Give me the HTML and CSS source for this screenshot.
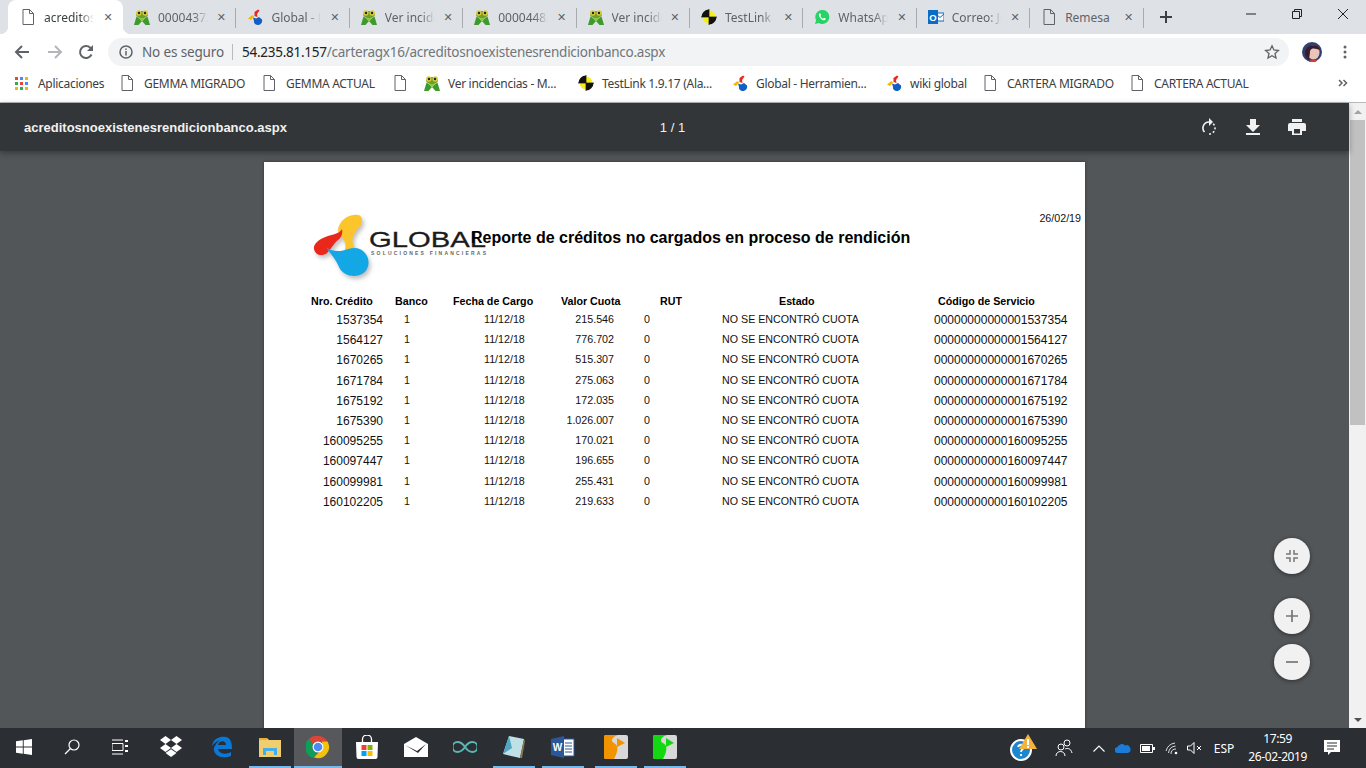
FILE: index.html
```html
<!DOCTYPE html>
<html lang="es">
<head>
  <meta charset="UTF-8" />
  <title>acreditosnoexistenesrendicionbanco.aspx</title>
  <link rel="stylesheet" href="styles.css">
</head>
<body>

  <!-- Shared icons -->
  <svg class="sprite" width="0" height="0">
    <symbol id="i-doc" viewBox="0 0 16 16">
      <path d="M3 .5h6.500L13.500 4.500v11H3z M9.500 .5v4h4" fill="none" stroke="#5f6368" stroke-width="1"/>
    </symbol>
    <symbol id="i-mantis" viewBox="0 0 16 16">
      <path d="M0 16 2.500 7.500 6 10l2 3 2-3 3.500-2.500L16 16h-4.500L8 12l-3.500 4z" fill="#3f9a2c"/>
      <path d="M4.500 8.500 8 12.500l3.500-4L8 7z" fill="#8cc63f"/>
      <ellipse cx="8" cy="5.500" rx="6" ry="3.500" fill="#6f9e2a"/>
      <circle cx="4.800" cy="4" r="2.700" fill="#d9cf3a"/>
      <circle cx="11.200" cy="4" r="2.700" fill="#d9cf3a"/>
      <circle cx="5" cy="4" r="1.200" fill="#222"/>
      <circle cx="11" cy="4" r="1.200" fill="#222"/>
    </symbol>
    <symbol id="i-global" viewBox="0 0 16 16">
      <path d="M7.500 3 11 0.500l1.500 1L10 5l.500 3-3-1z" fill="#e8281e"/>
      <path d="M1 9.500 5.500 6 7 7.500 4 11z" fill="#f7b500"/>
      <path d="M6 8.500l3 1 3-1.500 3 2.500c.8 3-1.500 5.500-4 5.500s-4.500-2-4-4z" fill="#0f5fc4"/>
    </symbol>
    <symbol id="i-testlink" viewBox="0 0 16 16">
      <circle cx="8" cy="8" r="6.500" fill="#f5ee1b"/>
      <path d="M8 8V.500A7.500 7.500 0 0 0 .500 8z M8 8v7.500A7.500 7.500 0 0 0 15.500 8z" fill="#111"/>
      <path d="M8 0v16M0 8h16" stroke="#111" stroke-width=".7"/>
    </symbol>
    <symbol id="i-whatsapp" viewBox="0 0 16 16">
      <path d="M1 15l1.100-3.800A7 7 0 1 1 4.800 14z" fill="#25d366"/>
      <path d="M5.500 4.500c-1 1-.8 2.500.5 4.200 1.300 1.700 3 2.800 4.300 2.600 1-.2 1.500-1 1.500-1.700L10 8.700l-.9 1C8 9.300 6.900 8.200 6.300 7l.8-1-.8-1.700z" fill="#fff"/>
    </symbol>
    <symbol id="i-outlook" viewBox="0 0 16 16">
      <rect x="8" y="4" width="8" height="8" fill="#fff" stroke="#0a6cc4"/>
      <path d="M8 5l4 3.500L16 5" fill="none" stroke="#0a6cc4"/>
      <rect x="0" y="1" width="10" height="14" fill="#0a6cc4"/>
      <text x="5" y="11.500" font-size="9.500" font-weight="700" font-family="Liberation Sans" text-anchor="middle" fill="#fff">O</text>
    </symbol>
  </svg>

  <!-- Tab strip -->
  <div class="tabstrip">
    <div class="tab tab-active">
      <svg class="tab-icon"><use href="#i-doc"/></svg>
      <span class="tab-title">acreditosn</span>
      <span class="tab-close">&#x2715;</span>
    </div>
    <div class="tab">
      <svg class="tab-icon"><use href="#i-mantis"/></svg>
      <span class="tab-title">00004372</span>
      <span class="tab-close">&#x2715;</span>
    </div>
    <div class="tab">
      <svg class="tab-icon"><use href="#i-global"/></svg>
      <span class="tab-title">Global - H</span>
      <span class="tab-close">&#x2715;</span>
    </div>
    <div class="tab">
      <svg class="tab-icon"><use href="#i-mantis"/></svg>
      <span class="tab-title">Ver incide</span>
      <span class="tab-close">&#x2715;</span>
    </div>
    <div class="tab">
      <svg class="tab-icon"><use href="#i-mantis"/></svg>
      <span class="tab-title">00004482</span>
      <span class="tab-close">&#x2715;</span>
    </div>
    <div class="tab">
      <svg class="tab-icon"><use href="#i-mantis"/></svg>
      <span class="tab-title">Ver incide</span>
      <span class="tab-close">&#x2715;</span>
    </div>
    <div class="tab">
      <svg class="tab-icon"><use href="#i-testlink"/></svg>
      <span class="tab-title">TestLink 1</span>
      <span class="tab-close">&#x2715;</span>
    </div>
    <div class="tab">
      <svg class="tab-icon"><use href="#i-whatsapp"/></svg>
      <span class="tab-title">WhatsApp</span>
      <span class="tab-close">&#x2715;</span>
    </div>
    <div class="tab">
      <svg class="tab-icon"><use href="#i-outlook"/></svg>
      <span class="tab-title">Correo: Ju</span>
      <span class="tab-close">&#x2715;</span>
    </div>
    <div class="tab">
      <svg class="tab-icon"><use href="#i-doc"/></svg>
      <span class="tab-title tab-title-short">Remesa</span>
      <span class="tab-close">&#x2715;</span>
    </div>
    <svg class="new-tab" width="14" height="14" viewBox="0 0 14 14"><path d="M7 1v12M1 7h12" stroke="#3c4043" stroke-width="2"/></svg>
    <div class="window-controls">
      <svg width="12" height="12" viewBox="0 0 12 12"><path d="M1 6h10" stroke="#222" stroke-width="1"/></svg>
      <svg width="12" height="12" viewBox="0 0 12 12"><path d="M1.500 3.500h7v7h-7z M3.500 3.500v-2h7v7h-2" fill="none" stroke="#222"/></svg>
      <svg width="12" height="12" viewBox="0 0 12 12"><path d="M1 1l10 10M11 1 1 11" stroke="#222"/></svg>
    </div>
  </div>

  <!-- Address bar -->
  <div class="toolbar">
    <svg class="nav-icon" viewBox="0 0 16 16"><path d="M15 8H2M8 2 2 8l6 6" fill="none" stroke="#5f6368" stroke-width="2"/></svg>
    <svg class="nav-icon nav-forward" viewBox="0 0 16 16"><path d="M1 8h13M8 2l6 6-6 6" fill="none" stroke="#b4b6b9" stroke-width="2"/></svg>
    <svg class="nav-icon" viewBox="0 0 16 16"><path d="M13.500 10.500A6 6 0 1 1 12.300 3.800L14.500 6" fill="none" stroke="#5f6368" stroke-width="2"/><path d="M15 1v6H9z" fill="#5f6368"/></svg>
    <div class="omnibox">
      <svg class="info-icon" width="14" height="14" viewBox="0 0 14 14"><circle cx="7" cy="7" r="6" fill="none" stroke="#5f6368" stroke-width="1.500"/><path d="M7 6v4.500M7 3.500v1.500" stroke="#5f6368" stroke-width="1.500"/></svg>
      <span class="not-secure">No es seguro</span>
      <span class="url"><b class="url-host">54.235.81.157</b>/carteragx16/acreditosnoexistenesrendicionbanco.aspx</span>
      <svg class="star-icon" width="16" height="16" viewBox="0 0 16 16"><path d="M8 1.800l1.900 4.200 4.500.5-3.400 3 1 4.500L8 11.700 4 14l1-4.500-3.400-3 4.500-.5z" fill="none" stroke="#5f6368" stroke-width="1.300"/></svg>
    </div>
    <svg class="avatar" width="20" height="20" viewBox="0 0 20 20">
      <circle cx="10" cy="10" r="10" fill="#33406f"/>
      <ellipse cx="11.500" cy="10.500" rx="6" ry="7" fill="#e9c4b8"/>
      <path d="M3 11C3 3 15 0 18 8 14 7 10 5 8 9c0 4-1 6-1 9-2-1-4-4-4-7z" fill="#3a1d2a"/>
      <path d="M7 20c1-3 6-3 8-1-3 2-5 2-8 1z" fill="#d63a3a"/>
    </svg>
    <svg class="menu-icon" width="4" height="14" viewBox="0 0 4 14"><circle cx="2" cy="2" r="1.500" fill="#5f6368"/><circle cx="2" cy="7" r="1.500" fill="#5f6368"/><circle cx="2" cy="12" r="1.500" fill="#5f6368"/></svg>
  </div>

  <!-- Bookmarks -->
  <div class="bookmarks">
    <a class="bookmark">
      <svg class="apps-icon" width="13" height="13" viewBox="0 0 13 13">
        <rect width="3" height="3" fill="#e8453c"/><rect x="5" width="3" height="3" fill="#4a8cf0"/><rect x="10" width="3" height="3" fill="#f4b400"/>
        <rect y="5" width="3" height="3" fill="#34a853"/><rect x="5" y="5" width="3" height="3" fill="#e8453c"/><rect x="10" y="5" width="3" height="3" fill="#4a8cf0"/>
        <rect y="10" width="3" height="3" fill="#f4b400"/><rect x="5" y="10" width="3" height="3" fill="#34a853"/><rect x="10" y="10" width="3" height="3" fill="#f4b400"/>
      </svg>
      Aplicaciones
    </a>
    <a class="bookmark"><svg class="bm-icon bm-doc"><use href="#i-doc"/></svg>GEMMA MIGRADO</a>
    <a class="bookmark"><svg class="bm-icon bm-doc"><use href="#i-doc"/></svg>GEMMA ACTUAL</a>
    <a class="bookmark"><svg class="bm-icon bm-doc"><use href="#i-doc"/></svg></a>
    <a class="bookmark"><svg class="bm-icon"><use href="#i-mantis"/></svg>Ver incidencias - M...</a>
    <a class="bookmark"><svg class="bm-icon"><use href="#i-testlink"/></svg>TestLink 1.9.17 (Ala...</a>
    <a class="bookmark"><svg class="bm-icon"><use href="#i-global"/></svg>Global - Herramien...</a>
    <a class="bookmark"><svg class="bm-icon"><use href="#i-global"/></svg>wiki global</a>
    <a class="bookmark"><svg class="bm-icon bm-doc"><use href="#i-doc"/></svg>CARTERA MIGRADO</a>
    <a class="bookmark"><svg class="bm-icon bm-doc"><use href="#i-doc"/></svg>CARTERA ACTUAL</a>
    <svg class="bm-more" width="10" height="8" viewBox="0 0 10 8"><path d="M1 1l3 3-3 3M5.500 1l3 3-3 3" fill="none" stroke="#5f6368" stroke-width="1.500"/></svg>
  </div>

  <!-- PDF viewer -->
  <div class="viewer">
    <div class="viewer-main">
      <div class="pdf-toolbar">
        <span class="pdf-name">acreditosnoexistenesrendicionbanco.aspx</span>
        <span class="pdf-pages">1 / 1</span>
        <div class="pdf-actions">
          <svg width="16" height="18" viewBox="0 0 16 18"><path d="M8 4a6 6 0 0 0-4.500 10" fill="none" stroke="#f1f1f1" stroke-width="1.600"/><path d="M8 0v8l4-4z" fill="#f1f1f1"/><path d="M12.200 5.700A6 6 0 0 1 8 16" fill="none" stroke="#f1f1f1" stroke-width="1.600" stroke-dasharray="2 2"/></svg>
          <svg width="14" height="16" viewBox="0 0 14 16"><path d="M4 0h6v6h4l-7 7-7-7h4zM0 14h14v2H0z" fill="#f1f1f1"/></svg>
          <svg width="18" height="16" viewBox="0 0 18 16"><path d="M4 0h10v3H4zM2 4h14a2 2 0 0 1 2 2v6h-4v4H4v-4H0V6a2 2 0 0 1 2-2z" fill="#f1f1f1"/><path d="M6 10h6v4.500H6z" fill="#323639"/></svg>
        </div>
      </div>

      <div class="pdf-stage">
        <div class="pdf-page">
          <div class="report-head">
            <div class="report-logo">
              <svg width="180" height="70" viewBox="0 0 180 70">
                <g class="logo-mark">
                  <path d="M29 12C32 6 40 2 47 3 52 4 52 10 49 14 44 20 40 24 42 32 43 36 45 37 47 38L34 38C36 32 33 27 29 23 26 20 27 15 29 12Z" fill="#fcc52b"/>
                  <path d="M31 17C29 21 24 22 17 24 8 27 2 32 3 37 4 43 11 45 16 41 20 37 23 31 27 28 30 26 32 22 31 17Z" fill="#e9281b"/>
                  <path d="M15 35C20 40 30 40 37 37 44 35 50 36 54 41 60 48 58 58 51 62 44 66 32 64 28 55 25 47 20 43 15 35Z" fill="#14a7e6"/>
                </g>
                <text class="logo-word" x="58" y="35" textLength="117" lengthAdjust="spacingAndGlyphs">GLOBAL</text>
                <text class="logo-sub" x="60" y="43" textLength="115" lengthAdjust="spacing">SOLUCIONES FINANCIERAS</text>
              </svg>
            </div>
            <h1 class="report-title">Reporte de créditos no cargados en proceso de rendición</h1>
            <span class="report-date">26/02/19</span>
          </div>

          <div class="report-row report-row-head">
            <span class="c-nro">Nro. Crédito</span>
            <span class="c-banco">Banco</span>
            <span class="c-fecha">Fecha de Cargo</span>
            <span class="c-valor">Valor Cuota</span>
            <span class="c-rut">RUT</span>
            <span class="c-estado">Estado</span>
            <span class="c-codigo">Código de Servicio</span>
          </div>

          <div class="report-row">
            <span class="c-nro">1537354</span><span class="c-banco">1</span><span class="c-fecha">11/12/18</span><span class="c-valor">215.546</span><span class="c-rut">0</span><span class="c-estado">NO SE ENCONTRÓ CUOTA</span><span class="c-codigo">00000000000001537354</span>
          </div>
          <div class="report-row">
            <span class="c-nro">1564127</span><span class="c-banco">1</span><span class="c-fecha">11/12/18</span><span class="c-valor">776.702</span><span class="c-rut">0</span><span class="c-estado">NO SE ENCONTRÓ CUOTA</span><span class="c-codigo">00000000000001564127</span>
          </div>
          <div class="report-row">
            <span class="c-nro">1670265</span><span class="c-banco">1</span><span class="c-fecha">11/12/18</span><span class="c-valor">515.307</span><span class="c-rut">0</span><span class="c-estado">NO SE ENCONTRÓ CUOTA</span><span class="c-codigo">00000000000001670265</span>
          </div>
          <div class="report-row">
            <span class="c-nro">1671784</span><span class="c-banco">1</span><span class="c-fecha">11/12/18</span><span class="c-valor">275.063</span><span class="c-rut">0</span><span class="c-estado">NO SE ENCONTRÓ CUOTA</span><span class="c-codigo">00000000000001671784</span>
          </div>
          <div class="report-row">
            <span class="c-nro">1675192</span><span class="c-banco">1</span><span class="c-fecha">11/12/18</span><span class="c-valor">172.035</span><span class="c-rut">0</span><span class="c-estado">NO SE ENCONTRÓ CUOTA</span><span class="c-codigo">00000000000001675192</span>
          </div>
          <div class="report-row">
            <span class="c-nro">1675390</span><span class="c-banco">1</span><span class="c-fecha">11/12/18</span><span class="c-valor">1.026.007</span><span class="c-rut">0</span><span class="c-estado">NO SE ENCONTRÓ CUOTA</span><span class="c-codigo">00000000000001675390</span>
          </div>
          <div class="report-row">
            <span class="c-nro">160095255</span><span class="c-banco">1</span><span class="c-fecha">11/12/18</span><span class="c-valor">170.021</span><span class="c-rut">0</span><span class="c-estado">NO SE ENCONTRÓ CUOTA</span><span class="c-codigo">00000000000160095255</span>
          </div>
          <div class="report-row">
            <span class="c-nro">160097447</span><span class="c-banco">1</span><span class="c-fecha">11/12/18</span><span class="c-valor">196.655</span><span class="c-rut">0</span><span class="c-estado">NO SE ENCONTRÓ CUOTA</span><span class="c-codigo">00000000000160097447</span>
          </div>
          <div class="report-row">
            <span class="c-nro">160099981</span><span class="c-banco">1</span><span class="c-fecha">11/12/18</span><span class="c-valor">255.431</span><span class="c-rut">0</span><span class="c-estado">NO SE ENCONTRÓ CUOTA</span><span class="c-codigo">00000000000160099981</span>
          </div>
          <div class="report-row">
            <span class="c-nro">160102205</span><span class="c-banco">1</span><span class="c-fecha">11/12/18</span><span class="c-valor">219.633</span><span class="c-rut">0</span><span class="c-estado">NO SE ENCONTRÓ CUOTA</span><span class="c-codigo">00000000000160102205</span>
          </div>
        </div>

        <!-- Zoom buttons float over the page -->
        <div class="zoom-buttons">
          <div class="fab fab-fit"><svg width="14" height="14" viewBox="0 0 14 14"><path d="M5 1v4H1M9 1v4h4M5 13V9H1M9 13V9h4" fill="none" stroke="#777" stroke-width="1.500"/></svg></div>
          <div class="fab"><svg width="14" height="14" viewBox="0 0 14 14"><path d="M7 1v12M1 7h12" stroke="#777" stroke-width="1.700"/></svg></div>
          <div class="fab"><svg width="14" height="14" viewBox="0 0 14 14"><path d="M1 7h12" stroke="#777" stroke-width="1.700"/></svg></div>
        </div>
      </div>
    </div>

    <div class="scrollbar">
      <span class="scroll-up"></span>
      <span class="scroll-thumb"></span>
      <span class="scroll-down"></span>
    </div>
  </div>

  <!-- Windows taskbar -->
  <div class="taskbar">
    <div class="task-tile task-narrow"><svg width="16" height="16" viewBox="0 0 16 16"><path d="M0 2.300 6.800 1.300v6.300H0zM7.700 1.200 16 0v7.600H7.700zM0 8.400h6.800v6.300L0 13.700zM7.700 8.400H16V16l-8.300-1.200z" fill="#fff"/></svg></div>
    <div class="task-tile task-narrow"><svg width="16" height="16" viewBox="0 0 16 16"><circle cx="10" cy="6" r="5" fill="none" stroke="#fff" stroke-width="1.200"/><path d="M6.500 9.500 1 15" stroke="#fff" stroke-width="1.300"/></svg></div>
    <div class="task-tile task-narrow"><svg width="16" height="16" viewBox="0 0 16 16"><path d="M0 4.500h11v7H0zM0 1h11M0 15h11" fill="none" stroke="#fff"/><path d="M13 1h3v2h-3zM13 6h3v2h-3zM13 11h3v2h-3z" fill="#fff"/></svg></div>
    <div class="task-tile task-dropbox"><svg width="24" height="22" viewBox="0 0 24 22"><path d="M6.500 0 12 4 6.500 8 1 4zM17.500 0 23 4l-5.500 4L12 4zM6.500 8 12 12l-5.500 4L1 12zM17.500 8 23 12l-5.500 4L12 12zM6.500 17l5.500-3.700 5.500 3.700L12 21z" fill="#fff"/></svg></div>
    <div class="task-tile task-edge"><svg width="22" height="22" viewBox="0 0 22 22"><path d="M1 10C2 2 10 0 15 1c5 1 6 6 6 12H7c1 5 8 6 13 3v4c-7 3-16 1-17-6-.3-2 0-3 1-4 1-3 5-6 5-6-3 1-6 3-8 6zM7 9h8c0-5-7-5-8 0z" fill="#0a78d7"/></svg></div>
    <div class="task-tile task-running"><svg width="22" height="20" viewBox="0 0 22 20"><path d="M0 1h8l2 2h12v17H0z" fill="#f0cd6e"/><path d="M0 1h8v2H0z" fill="#e3b13c"/><path d="M4 18v-7h14v7h-3v-4H7v4z" fill="#3fb0e8"/></svg></div>
    <div class="task-tile task-narrow task-tile-active">
      <svg width="24" height="24" viewBox="0 0 24 24">
        <path d="M12 1a11 11 0 0 1 9.500 5.500H12a5.500 5.500 0 0 0-5 3L3 3.800A11 11 0 0 1 12 1z" fill="#db4437"/>
        <path d="M3 3.800 7 9.500a5.500 5.500 0 0 0 4 8L8 23A11 11 0 0 1 3 3.800z" fill="#0f9d58"/>
        <path d="M21.500 6.500A11 11 0 0 1 8 22.300L12.500 17.500a5.500 5.500 0 0 0 4-8 5 5 0 0 0-1-3z" fill="#f4c20d"/>
        <circle cx="12" cy="12" r="5.500" fill="#fff"/><circle cx="12" cy="12" r="4.300" fill="#4c8bf5"/>
      </svg>
    </div>
    <div class="task-tile"><svg width="24" height="24" viewBox="0 0 24 24"><path d="M1 7h22l-.5 15a2 2 0 0 1-2 2h-17a2 2 0 0 1-2-2z" fill="#fff"/><path d="M7.500 9V4a4.500 4 0 0 1 9 0v5" fill="none" stroke="#fff" stroke-width="1.300"/><rect x="6.500" y="10" width="5" height="5" fill="#e8432e"/><rect x="12.500" y="10" width="5" height="5" fill="#7db701"/><rect x="6.500" y="16" width="5" height="5" fill="#00a1f1"/><rect x="12.500" y="16" width="5" height="5" fill="#ffb900"/></svg></div>
    <div class="task-tile"><svg width="24" height="20" viewBox="0 0 24 20"><path d="M0 7 12 0l12 7v13H0z" fill="#fff"/><path d="M1 8l12 6 9-7-8 9z" fill="#2b2e33"/></svg></div>
    <div class="task-tile"><svg width="24" height="14" viewBox="0 0 24 14"><path d="M12 7C9 2.500 6.500 2 4.500 2a5 5 0 0 0 0 10C6.500 12 9 11.500 12 7c3-4.500 5.500-5 7.500-5a5 5 0 0 1 0 10c-2 0-4.500-.5-7.500-5z" fill="none" stroke="#58b7b5" stroke-width="2"/></svg></div>
    <div class="task-tile task-running"><svg width="24" height="24" viewBox="0 0 24 24"><path d="M7 1l15 3-4 19L1 19z" fill="#bfe1e6"/><path d="M7 1 1 19l9-6z" fill="#4fa8c0"/><path d="M18 23 22 4l1 2-3 17z" fill="#8d7a50"/></svg></div>
    <div class="task-tile task-running"><svg width="24" height="22" viewBox="0 0 24 22"><path d="M9 3h14v17H9z" fill="#fff" stroke="#2b579a"/><path d="M14 7h7M14 10h7M14 13h7M14 16h7" stroke="#2b579a"/><path d="M0 3 13 0v22L0 19z" fill="#2b579a"/><text x="6.500" y="15" font-size="10" font-weight="700" font-family="Liberation Sans" text-anchor="middle" fill="#fff">W</text></svg></div>
    <div class="task-tile task-running task-gap"><svg width="24" height="24" viewBox="0 0 24 24"><rect width="24" height="24" rx="2" fill="#d8d8d8"/><path d="M0 2a2 2 0 0 1 2-2h12c-6 2-8 6-4 8 4 2 5 7 0 16H2a2 2 0 0 1-2-2z" fill="#f29400"/><path d="M13 3l8 5-8 4z" fill="#f29400"/></svg></div>
    <div class="task-tile task-running"><svg width="24" height="24" viewBox="0 0 24 24"><rect width="24" height="24" rx="2" fill="#d8d8d8"/><path d="M0 2a2 2 0 0 1 2-2h12c-6 2-8 6-4 8 4 2 5 7 0 16H2a2 2 0 0 1-2-2z" fill="#12d812"/><path d="M13 3l8 5-8 4z" fill="#12d812"/></svg></div>

    <div class="tray">
      <svg class="tray-help" width="28" height="28" viewBox="0 0 28 28"><circle cx="12" cy="16" r="10" fill="#1d86d0" stroke="#fff" stroke-width="2"/><path d="M9 13c1-3 6-3 6 0 0 2-3 2-3 5M12 20v2" fill="none" stroke="#fff" stroke-width="1.800"/><path d="M19 0l9 15H10z" fill="#f4b33c"/><path d="M19 5v6M19 12v2" stroke="#fff" stroke-width="2"/></svg>
      <svg class="tray-people" width="18" height="18" viewBox="0 0 18 18"><circle cx="6" cy="8" r="3" fill="none" stroke="#fff"/><circle cx="12" cy="4" r="3" fill="none" stroke="#fff"/><path d="M1 17c0-6 9-6 9 0M10 10c2-1 6-1 7 4" fill="none" stroke="#fff"/></svg>
      <svg class="tray-chevron" width="12" height="7" viewBox="0 0 12 7"><path d="M.5 6.500 6 1l5.500 5.500" fill="none" stroke="#fff" stroke-width="1.100"/></svg>
      <svg class="tray-cloud" width="16" height="10" viewBox="0 0 16 10"><path d="M3 10a3 3 0 0 1-.5-6A4.500 4.500 0 0 1 10 2.500 3.500 3.500 0 0 1 13 10z" fill="#1b7bd8"/></svg>
      <svg class="tray-battery" width="15" height="9" viewBox="0 0 15 9"><path d="M.5.500h12v8H.5z" fill="none" stroke="#fff"/><path d="M2 2h8v5H2z" fill="#fff"/><path d="M13 3h2v3h-2z" fill="#fff"/></svg>
      <svg class="tray-wifi" width="14" height="14" viewBox="0 0 14 14"><path d="M1 10a11 11 0 0 1 9-8M3.500 12a8 8 0 0 1 7-7M6 13a4.500 4.500 0 0 1 5-5" fill="none" stroke="#ddd"/><circle cx="11" cy="12" r="1.300" fill="#fff"/></svg>
      <svg class="tray-volume" width="16" height="12" viewBox="0 0 16 12"><path d="M.5 4h3l3.500-3.500v11L3.500 8h-3z" fill="none" stroke="#fff"/><path d="M10 4l4 4M14 4l-4 4" stroke="#fff"/></svg>
      <span class="tray-lang">ESP</span>
      <span class="tray-clock">17:59<br>26-02-2019</span>
      <svg class="tray-notes" width="16" height="16" viewBox="0 0 16 16"><path d="M0 0h16v12H7l-3 3v-3H0z" fill="#fff"/><path d="M3 3h10M3 6h10M3 9h7" stroke="#2b2e33"/></svg>
    </div>
  </div>

</body>
</html>
```

FILE: styles.css
```css
/* Whole window */
html, body {
  height: 100%;
}

body {
  margin: 0;
  overflow: hidden;
  display: flex;
  flex-direction: column;
  font-family: "Noto Sans", "Open Sans", sans-serif;
  background-color: #525659;
}

.sprite {
  position: absolute;
}

/* Tab strip */
.tabstrip {
  height: 34px;
  flex: none;
  display: flex;
  align-items: stretch;
  padding-left: 8px;
  background-color: #dee1e6;
}

.tab {
  position: relative;
  box-sizing: border-box;
  width: 113.4px;
  flex: none;
  display: flex;
  align-items: center;
  padding: 0 8px 0 11px;
  color: #5f6368;
  font-size: 12px;
}

.tab::after {
  content: "";
  position: absolute;
  right: 0;
  top: 8px;
  height: 20px;
  width: 1px;
  background-color: #a8abaf;
}

.tab-active {
  width: 115px;
  padding-left: 12px;
  background-color: white;
  border-radius: 8px 8px 0 0;
  color: #3c4043;
}

.tab-active::after {
  right: -8px;
  top: auto;
  bottom: 0;
  width: 8px;
  height: 8px;
  background: radial-gradient(circle at 100% 0, transparent 8px, white 8.5px);
}

.tab-active::before {
  content: "";
  position: absolute;
  left: -8px;
  bottom: 0;
  width: 8px;
  height: 8px;
  background: radial-gradient(circle at 0 0, transparent 8px, white 8.5px);
}

.tab-icon {
  width: 16px;
  height: 16px;
  flex: none;
  margin-right: 8px;
}

.tab-title {
  width: 50px;
  flex: none;
  overflow: hidden;
  white-space: nowrap;
  -webkit-mask-image: linear-gradient(to right, black 72%, transparent 100%);
  mask-image: linear-gradient(to right, black 72%, transparent 100%);
}

.tab-title-short {
  -webkit-mask-image: none;
  mask-image: none;
}

.tab-close {
  margin-left: auto;
  width: 14px;
  text-align: center;
  font-size: 11px;
  font-family: "DejaVu Sans", sans-serif;
  font-weight: bold;
  color: #5f6368;
}

.new-tab {
  margin: 10px 0 0 15px;
}

.window-controls {
  margin-left: auto;
  display: flex;
  gap: 34px;
  padding: 8px 17px 0 0;
}

/* Address bar */
.toolbar {
  height: 32px;
  flex: none;
  box-sizing: border-box;
  display: flex;
  align-items: center;
  padding: 4px 0 0 14px;
  background-color: white;
}

.nav-icon {
  width: 16px;
  height: 16px;
  flex: none;
  margin-right: 17px;
}

.nav-forward {
  margin-right: 15px;
}

.omnibox {
  width: 1181px;
  height: 28px;
  margin-left: -3px;
  box-sizing: border-box;
  display: flex;
  align-items: center;
  padding: 0 9px 0 11px;
  border-radius: 14px;
  background-color: #f1f3f4;
  font-size: 13.5px;
  color: #70757a;
  white-space: nowrap;
}

.info-icon {
  flex: none;
  margin-right: 9px;
}

.not-secure {
  color: #5f6368;
  letter-spacing: -0.15px;
  padding-right: 8px;
  margin-right: 9px;
  border-right: 1px solid #b8babd;
  line-height: 16px;
}

.url {
  letter-spacing: -0.25px;
}

.url-host {
  font-weight: normal;
  color: #202124;
}

.star-icon {
  margin-left: auto;
}

.avatar {
  flex: none;
  margin-left: 13px;
}

.menu-icon {
  flex: none;
  margin-left: 21px;
}

/* Bookmarks */
.bookmarks {
  height: 37px;
  flex: none;
  box-sizing: border-box;
  display: grid;
  grid-template-columns: 104px 142px 131px 32px 154px 154px 154px 96px 147px 209px auto;
  align-items: center;
  padding: 0 19px 2px 15px;
  border-bottom: 1px solid #b9b9b9;
  background-color: white;
  font-size: 12px;
  letter-spacing: -0.3px;
  color: #3c4043;
}

.bookmark {
  display: flex;
  align-items: center;
  white-space: nowrap;
}

.apps-icon {
  flex: none;
  margin-right: 10px;
}

.bm-icon {
  width: 16px;
  height: 16px;
  flex: none;
  margin-right: 8px;
}

.bm-doc {
  margin-right: 9px;
}

/* PDF viewer */
.viewer {
  flex: 1;
  min-height: 0;
  display: flex;
}

.viewer-main {
  flex: 1;
  min-width: 0;
  display: flex;
  flex-direction: column;
}

.pdf-toolbar {
  position: relative;
  z-index: 1;
  height: 48px;
  flex: none;
  display: grid;
  grid-template-columns: 1fr auto 1fr;
  align-items: center;
  padding: 0 28px 0 24px;
  background-color: #323639;
  box-shadow: 0 2px 6px rgba(0, 0, 0, 0.35);
  color: #f1f1f1;
  font-family: "Liberation Sans", sans-serif;
  font-size: 13px;
}

.pdf-name {
  font-weight: bold;
}

.pdf-actions {
  justify-self: end;
  display: flex;
  align-items: center;
  gap: 28.5px;
  margin-right: 15px;
}

.pdf-stage {
  position: relative;
  flex: 1;
  min-height: 0;
  overflow: hidden;
  display: flex;
  justify-content: center;
  align-items: flex-start;
  padding-top: 11px;
}

/* The report page */
.pdf-page {
  width: 821px;
  height: 900px;
  flex: none;
  box-sizing: border-box;
  padding: 50px 4px 0 47px;
  background-color: white;
  box-shadow: 0 0 3px rgba(0, 0, 0, 0.4);
  font-family: "Liberation Sans", sans-serif;
  color: #111;
}

.report-head {
  height: 70px;
  display: flex;
  align-items: flex-start;
  margin-bottom: 10px;
}

.report-logo {
  width: 160px;
  flex: none;
  height: 70px;
}

.report-logo svg {
  display: block;
  overflow: visible;
}

.logo-mark {
  filter: drop-shadow(2px 3px 2px rgba(0, 0, 0, 0.25));
}

.logo-word {
  font-family: "Liberation Sans", sans-serif;
  font-size: 22px;
  fill: #1b1b1b;
  stroke: #1b1b1b;
  stroke-width: 0.3px;
}

.logo-sub {
  font-family: "Liberation Sans", sans-serif;
  font-size: 5px;
  font-weight: bold;
  fill: #666;
}

.report-title {
  margin: 17px 0 0;
  font-size: 16px;
  line-height: 18px;
  font-weight: bold;
  color: black;
  white-space: nowrap;
}

.report-date {
  margin-left: auto;
  font-size: 10.7px;
  line-height: 12px;
}

.report-row {
  display: grid;
  grid-template-columns: 72px 48px 109px 90px 70px 180px auto;
  align-items: center;
  height: 20.2px;
  font-size: 10.7px;
  white-space: nowrap;
}

/* The small cells sit a little above the big numbers on each row */
.report-row span {
  margin-bottom: 2px;
}

.report-row .c-nro,
.report-row .c-codigo {
  margin-bottom: 0;
}

.c-nro {
  font-size: 12px;
  text-align: right;
}

.c-banco {
  padding-left: 21px;
}

.c-fecha {
  padding-left: 53px;
}

.c-valor {
  padding-right: 16px;
  text-align: right;
}

.c-rut {
  padding-left: 14px;
}

.c-estado {
  padding-left: 22px;
}

.c-codigo {
  padding-left: 54px;
  font-size: 12px;
}

.report-row-head {
  height: 18px;
  font-size: 10.7px;
  font-weight: bold;
  color: black;
}

.report-row-head span {
  margin-bottom: 0;
}

.report-row-head .c-nro {
  font-size: 10.7px;
  text-align: left;
}

.report-row-head .c-banco {
  padding-left: 12px;
}

.report-row-head .c-fecha {
  padding-left: 22px;
}

.report-row-head .c-valor {
  padding: 0 0 0 21px;
  text-align: left;
}

.report-row-head .c-rut {
  padding-left: 30px;
}

.report-row-head .c-estado {
  padding-left: 79px;
}

.report-row-head .c-codigo {
  padding-left: 58px;
  font-size: 10.7px;
}

/* Round zoom buttons */
.zoom-buttons {
  position: absolute;
  right: 39px;
  top: 387px;
  display: flex;
  flex-direction: column;
  gap: 10px;
}

.fab {
  width: 36px;
  height: 36px;
  display: flex;
  align-items: center;
  justify-content: center;
  border-radius: 50%;
  background-color: #f1f1f1;
  box-shadow: 0 1px 4px rgba(0, 0, 0, 0.45);
}

.fab-fit {
  margin-bottom: 14px;
}

/* Page scrollbar */
.scrollbar {
  width: 17px;
  flex: none;
  display: flex;
  flex-direction: column;
  align-items: center;
  background-color: #f1f1f1;
}

.scroll-up {
  width: 0;
  height: 0;
  margin: 7px 0 6px;
  border-left: 4px solid transparent;
  border-right: 4px solid transparent;
  border-bottom: 4px solid #a3a3a3;
}

.scroll-thumb {
  width: 15px;
  height: 305px;
  background-color: #c1c1c1;
}

.scroll-down {
  width: 0;
  height: 0;
  margin-top: auto;
  margin-bottom: 6px;
  border-left: 4px solid transparent;
  border-right: 4px solid transparent;
  border-top: 4px solid #505050;
}

/* Windows taskbar */
.taskbar {
  height: 40px;
  flex: none;
  display: flex;
  align-items: stretch;
  background-color: #2b2e33;
}

.task-tile {
  width: 49px;
  flex: none;
  box-sizing: border-box;
  display: flex;
  align-items: center;
  justify-content: center;
  border-bottom: 2px solid transparent;
}

.task-narrow {
  width: 48px;
}

.task-dropbox {
  width: 54px;
}

.task-edge {
  width: 47px;
}

.task-tile-active {
  background-color: #56585b;
  border-bottom-color: #76b9ed;
}

.task-running {
  border-image: linear-gradient(to right, transparent 5px, #76b9ed 5px, #76b9ed 45px, transparent 45px) 1;
}

.task-gap {
  margin-left: 4px;
}

.tray {
  margin-left: auto;
  display: flex;
  align-items: center;
  color: white;
  font-size: 12px;
}

.tray-help {
  margin-right: 18px;
}

.tray-people {
  margin-right: 20px;
}

.tray-chevron {
  margin-right: 10px;
}

.tray-cloud {
  margin-right: 9px;
}

.tray-battery {
  margin-right: 10px;
}

.tray-wifi {
  margin-right: 8px;
}

.tray-volume {
  margin-right: 11px;
}

.tray-lang {
  margin-right: 14px;
}

.tray-clock {
  margin-right: 17px;
  text-align: center;
  line-height: 18px;
  letter-spacing: -0.4px;
}

.tray-notes {
  margin-right: 26px;
}
```
